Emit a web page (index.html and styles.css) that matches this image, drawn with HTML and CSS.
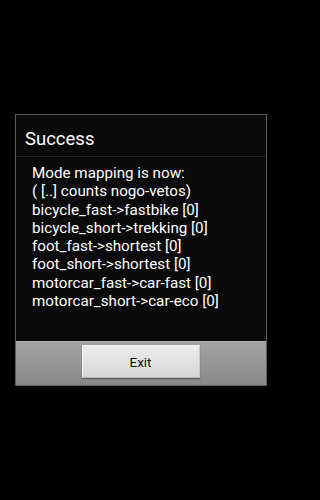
FILE: index.html
```html
<!DOCTYPE html>
<html>
<head>
<meta charset="utf-8">
<link rel="stylesheet" href="styles.css">
</head>
<body>
<div class="dialog">
  <div class="title">Success</div>
  <div class="message">
    <div>Mode mapping is now:</div>
    <div>( [..] counts nogo-vetos)</div>
    <div>bicycle_fast-&gt;fastbike [0]</div>
    <div>bicycle_short-&gt;trekking [0]</div>
    <div>foot_fast-&gt;shortest [0]</div>
    <div>foot_short-&gt;shortest [0]</div>
    <div>motorcar_fast-&gt;car-fast [0]</div>
    <div>motorcar_short-&gt;car-eco [0]</div>
  </div>
  <div class="actions">
    <button class="btn">Exit</button>
  </div>
</div>
</body>
</html>
```
FILE: styles.css
```css
html, body {
  margin: 0;
  padding: 0;
  background: #000;
  height: 100%;
}
body {
  padding-top: 114px;
  padding-left: 15px;
  box-sizing: border-box;
  font-family: Roboto, "Noto Sans", sans-serif;
}
.dialog {
  width: 252px;
  box-sizing: border-box;
  border: 1px solid #5e5e5e;
  background: #0a0a0a;
  color: #fff;
}
.title {
  height: 42px;
  box-sizing: border-box;
  padding: 13px 0 0 9px;
  font-size: 18.5px;
  line-height: 22px;
  border-bottom: 1px solid #242424;
}
.message {
  padding: 7px 0 0 16px;
  height: 184px;
  box-sizing: border-box;
  font-size: 15.2px;
  line-height: 18.3px;
  white-space: nowrap;
}
.actions {
  height: 44px;
  box-sizing: border-box;
  background: linear-gradient(#a2a2a2, #8a8a8a);
  border-top: 1px solid #b0b0b0;
  display: flex;
  justify-content: center;
  padding-top: 3px;
}
.btn {
  width: 118px;
  height: 33px;
  margin-left: -1px;
  border: 1px solid #f2f2f2;
  border-bottom-color: #b8b8b8;
  border-right-color: #c8c8c8;
  background: linear-gradient(#ececec, #d6d6d6);
  box-shadow: 0 1px 1px rgba(0,0,0,0.35);
  font-family: Roboto, "Noto Sans", sans-serif;
  font-size: 13.5px;
  color: #111;
  padding: 0;
}
```
